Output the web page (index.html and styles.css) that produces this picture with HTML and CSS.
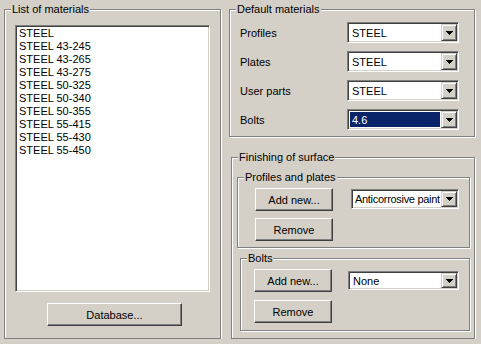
FILE: index.html
```html
<!DOCTYPE html>
<html lang="en">
<head>
  <meta charset="UTF-8" />
  <title>Materials</title>
  <link rel="stylesheet" href="styles.css">
</head>
<body>
  <div class="dialog">
    <!-- left: material list -->
    <div class="group group-list">
      <span class="group-title">List of materials</span>
      <div class="listbox">
        <div>STEEL</div>
        <div>STEEL 43-245</div>
        <div>STEEL 43-265</div>
        <div>STEEL 43-275</div>
        <div>STEEL 50-325</div>
        <div>STEEL 50-340</div>
        <div>STEEL 50-355</div>
        <div>STEEL 55-415</div>
        <div>STEEL 55-430</div>
        <div>STEEL 55-450</div>
      </div>
      <button type="button" class="btn btn-db">Database...</button>
    </div>

    <!-- right column -->
    <div class="right-col">
      <div class="group group-defaults">
        <span class="group-title">Default materials</span>
        <div class="field-rows">
          <div class="field-row">
            <span>Profiles</span>
            <div class="combo"><span class="combo-text">STEEL</span><span class="combo-btn"><svg width="7" height="4"><path d="M0 0h7v1h-1v1h-1v1h-1v1h-1v-1h-1v-1h-1v-1h-1z"/></svg></span></div>
          </div>
          <div class="field-row">
            <span>Plates</span>
            <div class="combo"><span class="combo-text">STEEL</span><span class="combo-btn"><svg width="7" height="4"><path d="M0 0h7v1h-1v1h-1v1h-1v1h-1v-1h-1v-1h-1v-1h-1z"/></svg></span></div>
          </div>
          <div class="field-row">
            <span>User parts</span>
            <div class="combo"><span class="combo-text">STEEL</span><span class="combo-btn"><svg width="7" height="4"><path d="M0 0h7v1h-1v1h-1v1h-1v1h-1v-1h-1v-1h-1v-1h-1z"/></svg></span></div>
          </div>
          <div class="field-row">
            <span>Bolts</span>
            <div class="combo"><span class="combo-text selected">4.6</span><span class="combo-btn"><svg width="7" height="4"><path d="M0 0h7v1h-1v1h-1v1h-1v1h-1v-1h-1v-1h-1v-1h-1z"/></svg></span></div>
          </div>
        </div>
      </div>

      <div class="group group-finish">
        <span class="group-title">Finishing of surface</span>

        <div class="group group-pp">
          <span class="group-title">Profiles and plates</span>
          <div class="finish-body">
            <div class="btn-col">
              <button type="button" class="btn btn-small">Add new...</button>
              <button type="button" class="btn btn-small">Remove</button>
            </div>
            <div class="combo combo-paint"><span class="combo-text">Anticorrosive paint</span><span class="combo-btn"><svg width="7" height="4"><path d="M0 0h7v1h-1v1h-1v1h-1v1h-1v-1h-1v-1h-1v-1h-1z"/></svg></span></div>
          </div>
        </div>

        <div class="group group-bolts">
          <span class="group-title">Bolts</span>
          <div class="finish-body">
            <div class="btn-col">
              <button type="button" class="btn btn-small">Add new...</button>
              <button type="button" class="btn btn-small">Remove</button>
            </div>
            <div class="combo combo-none"><span class="combo-text">None</span><span class="combo-btn"><svg width="7" height="4"><path d="M0 0h7v1h-1v1h-1v1h-1v1h-1v-1h-1v-1h-1v-1h-1z"/></svg></span></div>
          </div>
        </div>
      </div>
    </div>
  </div>
</body>
</html>
```

FILE: styles.css
```css
body { margin: 0; background: #d4d0c8; font: 11px "Liberation Sans", Arial, sans-serif; color: #000; }
* { box-sizing: border-box; }

.dialog { display: flex; gap: 8px; padding: 9px 0 0 4px; }

/* etched group box */
.group {
  display: flex; flex-direction: column;
  border: 1px solid #808080;
  box-shadow: inset 1px 1px #fff, 1px 1px #fff;
}
.group-title {
  align-self: flex-start; margin: -7px 0 0 6px; padding: 0 1px;
  background: #d4d0c8; line-height: 13px; white-space: nowrap;
}

.group-list { width: 217px; padding-bottom: 12px; }
.listbox {
  width: 195px; height: 267px; margin: 9px 0 0 10px; padding: 1px 3px;
  background: #fff; line-height: 13px;
  border: 1px solid; border-color: #808080 #fff #fff #808080;
  box-shadow: inset 1px 1px #404040, inset -1px -1px #d4d0c8;
}

.btn {
  height: 23px; padding: 0; font: inherit; color: #000;
  background: #d4d0c8;
  border: 1px solid; border-color: #fff #404040 #404040 #fff;
  box-shadow: inset -1px -1px #808080;
}
.btn-db { width: 135px; margin: 11px 0 0 42px; align-self: flex-start; }
.btn-small { width: 78px; }

.right-col { display: flex; flex-direction: column; }

.group-defaults { width: 246px; padding-bottom: 6px; }
.field-rows { display: flex; flex-direction: column; gap: 8px; margin-top: 6px; padding: 0 15px 0 10px; }
.field-row { display: flex; justify-content: space-between; align-items: center; }

/* combo box */
.combo {
  display: flex; width: 112px; height: 21px; padding: 1px;
  background: #fff;
  border: 1px solid; border-color: #808080 #fff #fff #808080;
  box-shadow: inset 1px 1px #404040, inset -1px -1px #d4d0c8;
}
.combo-text {
  flex: 1; display: flex; align-items: center; padding-left: 2px;
  overflow: hidden; white-space: nowrap; margin: 1px;
}
.combo-text.selected { background: #0a246a; color: #fff; }
.combo-btn {
  width: 16px; flex: none; display: flex; align-items: center; justify-content: center;
  background: #d4d0c8;
  border: 1px solid; border-color: #d4d0c8 #404040 #404040 #d4d0c8;
  box-shadow: inset 1px 1px #fff, inset -1px -1px #808080;
}
.combo-btn svg { display: block; shape-rendering: crispEdges; }

.group-finish { width: 244px; margin: 20px 0 0 2px; padding-bottom: 7px; }
.group-pp { width: 233px; margin: 13px 0 0 5px; padding-bottom: 6px; }
.group-bolts { width: 230px; margin: 10px 0 0 8px; padding-bottom: 7px; }

.finish-body { display: flex; align-items: flex-start; margin-top: 4px; }
.btn-col { display: flex; flex-direction: column; gap: 7px; }
.group-pp .finish-body { padding-left: 17px; }
.group-bolts .finish-body { padding-left: 13px; }
.group-bolts .btn-col { gap: 8px; }

.combo-paint { width: 108px; height: 20px; margin: 1px 0 0 18px; }
.combo-paint .combo-text { letter-spacing: -0.3px; padding-left: 1px; }
.combo-none { width: 111px; height: 19px; margin: 2px 0 0 16px; }
```
